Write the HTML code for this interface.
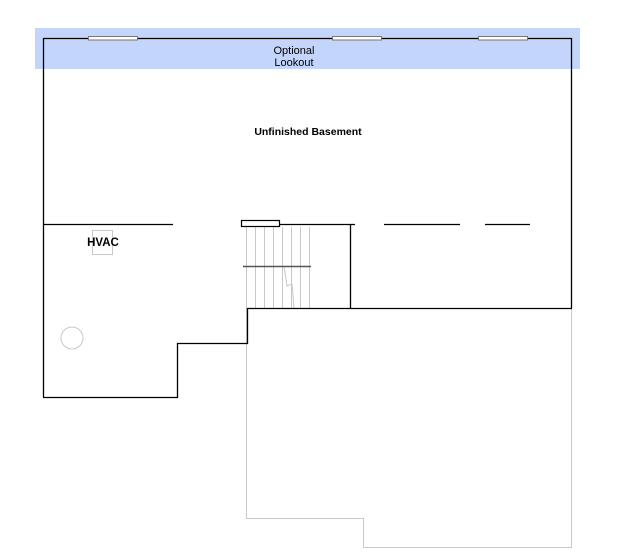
<!DOCTYPE html>
<html><head><meta charset="utf-8"><style>
html,body{margin:0;padding:0;background:#fff;width:631px;height:553px;overflow:hidden}
</style></head><body>
<svg width="631" height="553" viewBox="0 0 631 553" xmlns="http://www.w3.org/2000/svg">
<rect x="35" y="28" width="545" height="41" fill="#c3d5fb"/>
<g stroke="#c8c8c8" stroke-width="1" fill="none">
<path d="M246.5 308 V518.5 H363.5 V547.5 H571.5 V308"/>
<rect x="92.5" y="230.5" width="20" height="24"/>
<circle cx="72" cy="338" r="11"/>
<path d="M246.5 227V308M255.5 227V308M264.5 227V308M273.5 227V308M282.5 227V308M291.5 227V308M300.5 227V308M309.5 227V308"/>
<path d="M284 266 L287 286 L292 284 L294 308"/>
</g>
<g stroke="#000" stroke-width="1.3" fill="none">
<path d="M43.5 397 V38.5 H571.5 V308"/>
<path d="M43 224.5 H173"/>
<path d="M279 224.5 H355"/>
<path d="M384 224.5 H460"/>
<path d="M485 224.5 H530"/>
<path d="M350.5 224 V308"/>
<path d="M43 397.5 H177.5 V343.5 H247.5 V308.5 H572"/>
</g>
<path d="M243 266.5 H311" stroke="#555" stroke-width="1.5"/>
<rect x="241.5" y="220.5" width="38" height="6" fill="#fff" stroke="#000" stroke-width="1.2"/>
<g fill="#fff" stroke="#777" stroke-width="1">
<rect x="88.5" y="36.5" width="49" height="3.5"/>
<rect x="332.5" y="36.5" width="49" height="3.5"/>
<rect x="478.5" y="36.5" width="49" height="3.5"/>
</g>
<g font-family="Liberation Sans, sans-serif" font-size="11" fill="#000" text-anchor="middle">
<text x="294" y="54">Optional</text>
<text x="294" y="66">Lookout</text>
<text x="308" y="135" font-size="10.5" font-weight="bold">Unfinished Basement</text>
<text x="103" y="246" font-size="11.5" font-weight="bold">HVAC</text>
</g>
</svg>
</body></html>
